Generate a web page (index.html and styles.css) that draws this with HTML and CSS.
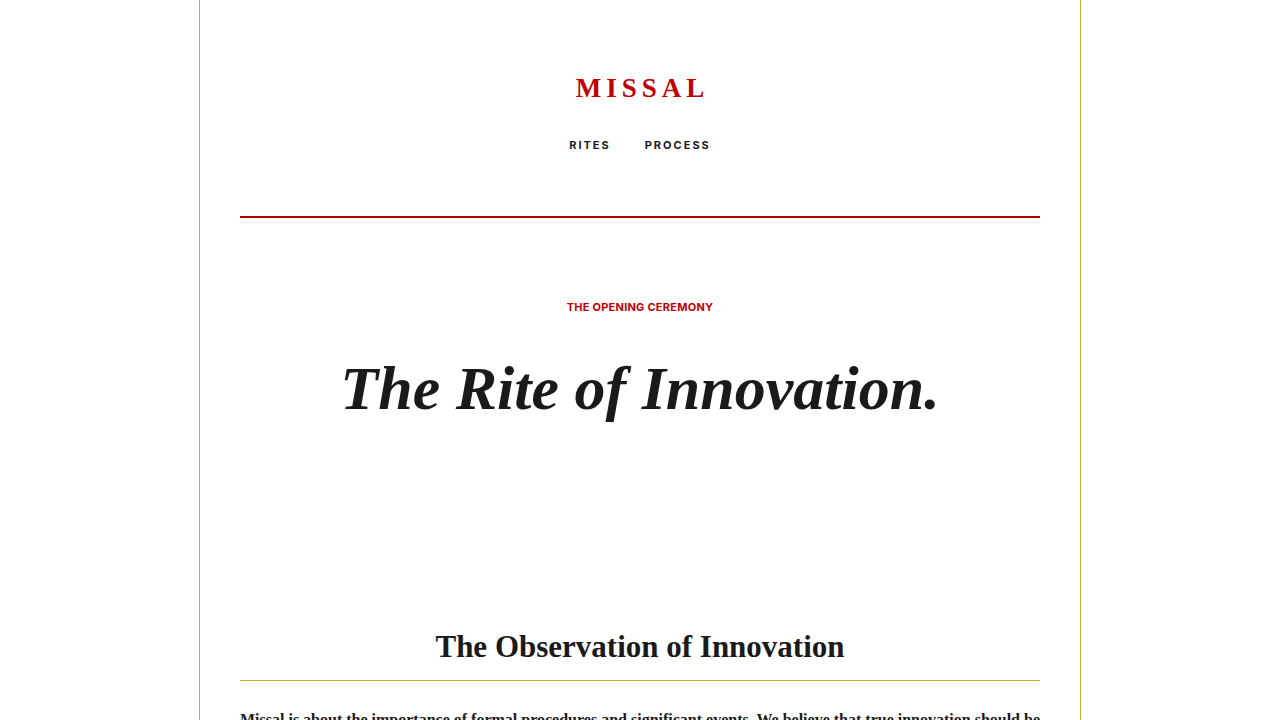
FILE: index.html
```html
<!DOCTYPE html>
<html lang="en">
<head>
<meta charset="utf-8">
<title>Missal</title>
<link rel="stylesheet" href="styles.css">
</head>
<body>
<div class="page">
  <header class="masthead">
    <div class="logo">MISSAL</div>
    <nav class="nav">
      <a href="#">RITES</a>
      <a href="#">PROCESS</a>
    </nav>
  </header>
  <section class="hero">
    <div class="kicker">THE OPENING CEREMONY</div>
    <h1 class="title">The Rite of Innovation.</h1>
  </section>
  <section class="observation">
    <h2 class="section-title">The Observation of Innovation</h2>
    <p class="body-text">Missal is about the importance of formal procedures and significant events. We believe that true innovation should be observed with care and ceremony, marking each step as a rite of passage.</p>
  </section>
</div>
</body>
</html>
```
FILE: styles.css
```css
html, body {
  margin: 0;
  padding: 0;
  background: #ffffff;
}
body {
  font-family: "Liberation Serif", serif;
  color: #1a1a1a;
}
.page {
  width: 800px;
  margin: 0 auto;
  padding: 0 40px;
  border-left: 1px solid #d4aa2a;
  border-right: 1px solid #d4aa2a;
  min-height: 720px;
}
.masthead {
  display: flex;
  flex-direction: column;
  align-items: center;
  padding-top: 73px;
  padding-bottom: 63px;
  border-bottom: 2px solid #b00000;
}
.logo {
  font-family: "Liberation Serif", serif;
  font-weight: 700;
  font-size: 27px;
  letter-spacing: 5px;
  margin-right: -5px;
  color: #c00000;
  line-height: 30px;
}
.nav {
  display: flex;
  gap: 34px;
  margin-top: 34px;
}
.nav a {
  font-family: Inter, sans-serif;
  font-weight: 700;
  font-size: 11px;
  letter-spacing: 2px;
  color: #1a1a1a;
  text-decoration: none;
  line-height: 16px;
}
.hero {
  display: flex;
  flex-direction: column;
  align-items: center;
  padding-top: 81px;
  height: 370px;
  box-sizing: border-box;
}
.kicker {
  font-family: Inter, sans-serif;
  font-weight: 700;
  font-size: 11px;
  letter-spacing: 0.25px;
  color: #c00000;
  line-height: 16px;
}
.title {
  margin: 37px 0 0;
  font-family: "Liberation Serif", serif;
  font-style: italic;
  font-weight: 700;
  font-size: 62px;
  line-height: 72px;
  color: #1a1a1a;
}
.observation {
  padding-top: 39px;
}
.section-title {
  margin: 0;
  text-align: center;
  font-family: "Liberation Serif", serif;
  font-weight: 700;
  font-size: 31px;
  line-height: 40px;
  padding-bottom: 13px;
  border-bottom: 1px solid #d4aa2a;
  color: #1a1a1a;
}
.body-text {
  margin: 27px 0 0;
  font-size: 16px;
  font-weight: 700;
  line-height: 24px;
  color: #1a1a1a;
}
```
